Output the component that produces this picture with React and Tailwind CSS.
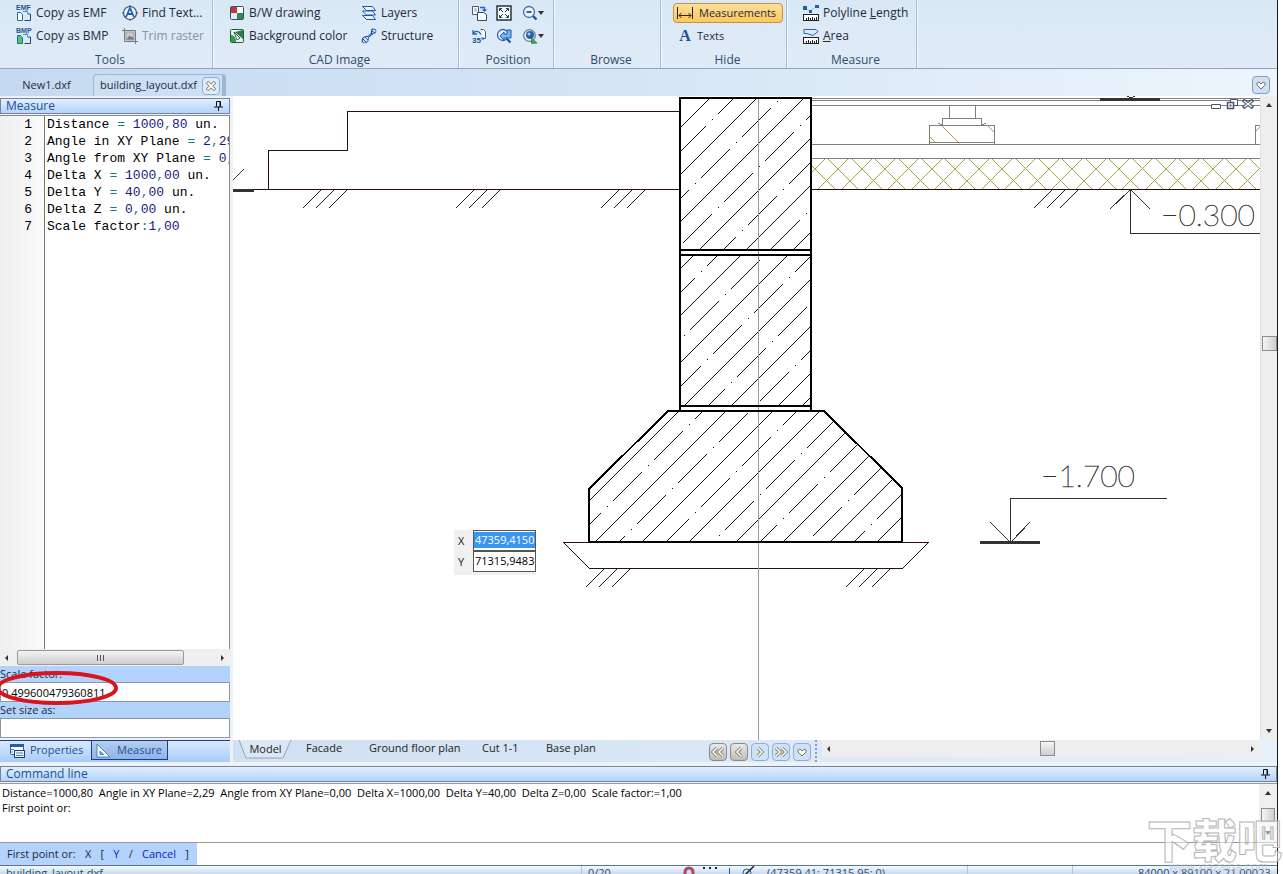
import { useState } from "react";

/* ---------- small icons ---------- */

const CopyIcon = ({ label, fill }) => (
  <svg width="16" height="18" viewBox="0 0 16 18" className="shrink-0">
    <text x="0" y="6" fontSize="7" fontWeight="700" fill="#1c5791" fontFamily="Liberation Sans, sans-serif">
      {label}
    </text>
    <path d="M1.500 8.500h3l2 2v6h-5z" fill={fill} stroke="#2b6a93" />
    <path d="M8.500 16.500h6v-6.500h-3" fill="none" stroke="#234a7a" />
    <path d="M7 7.500h4.500l-1.500-1.500M11.500 7.500v2" fill="none" stroke="#3b8fd0" />
  </svg>
);

const FindIcon = () => (
  <svg width="16" height="16" viewBox="0 0 16 16" className="shrink-0">
    <circle cx="8" cy="8" r="6.500" fill="#eef6ff" stroke="#3c4f6b" strokeWidth="1.200" />
    <path d="M4 12L8 3l4 9M5.500 9h5" fill="none" stroke="#1d62b5" strokeWidth="1.800" />
    <path d="M8 0v2M8 14v2M0 8h2M14 8h2" stroke="#3c4f6b" />
  </svg>
);

const TrimIcon = () => (
  <svg width="16" height="16" viewBox="0 0 16 16" className="shrink-0">
    <path d="M2.500 0v13.500H16M0 2.500h13.500V16" fill="none" stroke="#7a7a7a" />
    <rect x="4" y="4" width="8" height="8" fill="#c9c9c9" stroke="#9a9a9a" />
    <path d="M4.500 11.500l3-4 2 2 1-1 1.500 3z" fill="#777" />
  </svg>
);

const BwIcon = () => (
  <svg width="16" height="16" viewBox="0 0 16 16" className="shrink-0">
    <rect x="1.500" y="1.500" width="13" height="13" rx="1" fill="#fff" stroke="#31506e" />
    <path d="M2 2h6v6H2z" fill="#c8323a" />
    <path d="M8 8h6v6H8z" fill="#2f8d4c" />
    <path d="M2 8h6v6H2z" fill="#e4ebf2" />
  </svg>
);

const BackgroundIcon = () => (
  <svg width="16" height="16" viewBox="0 0 16 16" className="shrink-0">
    <rect x="1.500" y="1.500" width="13" height="13" rx="1" fill="#e8f5ea" stroke="#1f5e38" />
    <path d="M2 14V7c3 0 5 3 5 7z" fill="#2f9e4b" />
    <path d="M14 2v9L6 4z" fill="#2b7d44" />
    <path d="M5 4l6 6-3 2z" fill="#fff" stroke="#17384f" strokeWidth=".8" />
  </svg>
);

const LayersIcon = () => (
  <svg width="16" height="16" viewBox="0 0 16 16" className="shrink-0">
    <g fill="#e9f3ff" stroke="#1e57a6">
      <path d="M1.500 10.500h10l3 4h-9z" />
      <path d="M1.500 6h10l3 4h-9z" />
      <path d="M1.500 1.500h10l3 4h-9z" />
    </g>
  </svg>
);

const StructureIcon = () => (
  <svg width="16" height="16" viewBox="0 0 16 16" className="shrink-0">
    <path d="M1.500 14.500c-1-4 1-6 4-6s5 0 5-4 1-4 4-3" fill="none" stroke="#1f4f9c" strokeWidth="1.200" />
    <path d="M1.500 14.500c4 1 6-1 6-4s1-5 4-5 4-1 3-4" fill="none" stroke="#3f7fd0" strokeWidth="1.200" />
    <path d="M2 11l3 3M4 9l3 3M10 5l2 2M11 3l3 2" stroke="#1f4f9c" />
  </svg>
);

const PasteViewIcon = () => (
  <svg width="16" height="16" viewBox="0 0 16 16">
    <path d="M1.500 1.500h6v8h-6z" fill="#fff" stroke="#4b5b70" />
    <path d="M6.500 7.500h6l3 2v6h-9z" fill="#fff" stroke="#33475f" />
    <path d="M9 2.500h4.500V6M11.500 4.500l2 1.500 2-1.500" fill="none" stroke="#1d66bd" strokeWidth="1.300" />
    <path d="M3 4h3M3 6h3" stroke="#8ea2b8" />
  </svg>
);

const FitIcon = () => (
  <svg width="16" height="16" viewBox="0 0 16 16">
    <rect x="1" y="1" width="14" height="14" fill="#f6faff" stroke="#223344" strokeWidth="1.500" />
    <path d="M3.500 6V3.500H6M10 3.500h2.500V6M12.500 10v2.500H10M6 12.500H3.500V10M4 4l3 3M12 4L9 7M4 12l3-3M12 12L9 9" fill="none" stroke="#223344" />
  </svg>
);

const ZoomOutIcon = () => (
  <svg width="16" height="16" viewBox="0 0 16 16">
    <path d="M10.500 10.500l4 4" stroke="#1c4f99" strokeWidth="2.400" />
    <circle cx="7" cy="7" r="5.500" fill="#e8f3ff" stroke="#3b6fae" strokeWidth="1.300" />
    <path d="M4.500 7h5" stroke="#1b2f4d" strokeWidth="1.500" />
  </svg>
);

const RotateIcon = () => (
  <svg width="16" height="16" viewBox="0 0 16 16">
    <path d="M9.500 1.500h3l2 2v7h-3" fill="#fff" stroke="#4b5b70" />
    <path d="M2 5.500c2-3 6-3 8 1M2 2v4h4" fill="none" stroke="#1d66bd" strokeWidth="1.300" />
    <text x="1" y="15" fontSize="8" fontWeight="700" fill="#1c4f99" fontFamily="Liberation Sans, sans-serif">
      35°
    </text>
  </svg>
);

const ZoomBackIcon = () => (
  <svg width="16" height="16" viewBox="0 0 16 16">
    <circle cx="7" cy="7" r="5.500" fill="#e8f3ff" stroke="#2b63ad" strokeWidth="1.300" />
    <path d="M10.500 10.500l4 4" stroke="#1c4f99" strokeWidth="2.200" />
    <path d="M4 8l4-4v2h3V2h4v8H8v2z" fill="#7bb4ec" stroke="#1d5cae" />
  </svg>
);

const ZoomObjectIcon = () => (
  <svg width="16" height="16" viewBox="0 0 16 16">
    <circle cx="7.500" cy="7.500" r="5.800" fill="#eef4fa" stroke="#6c7c8d" strokeWidth="1.300" />
    <circle cx="8" cy="7" r="4" fill="#2b5f9f" />
    <circle cx="7" cy="6" r="1.500" fill="#9fd0ff" />
    <path d="M9.500 10l5.500 5-5.500.5z" fill="#3fae49" stroke="#1f7a2b" strokeWidth=".7" />
  </svg>
);

const MeasurementsIcon = () => (
  <svg width="16" height="14" viewBox="0 0 16 14" className="shrink-0">
    <path d="M.5 1v12M15.500 1v12" stroke="#222" />
    <path d="M2 9.500h12M4.500 7L2 9.500 4.500 12M11.500 7L14 9.500 11.500 12" fill="none" stroke="#222" />
  </svg>
);

const RulerIcon = ({ children }) => (
  <svg width="16" height="16" viewBox="0 0 16 16" className="shrink-0">
    {children}
    <rect x=".5" y="9.500" width="15" height="6" fill="#fff" stroke="#222" />
    <path d="M3.500 13v2M5.500 12v3M7.500 13v2M9.500 12v3M11.500 13v2M13.500 12v3" stroke="#222" />
  </svg>
);

const Pin = () => (
  <svg width="9" height="10" viewBox="0 0 9 10">
    <path d="M2.500 5.500v-5h4v5M0 6h9M4.500 6v4" fill="none" stroke="#111" />
    <path d="M6 1v5" stroke="#111" />
  </svg>
);

const Tri = ({ dir }) => {
  const d = {
    up: "M0 5l3-4 3 4z",
    down: "M0 1h6L3 5z",
    left: "M4 0v6L1 3z",
    right: "M1 0v6l3-3z",
  }[dir];
  return (
    <svg width="6" height="6" viewBox="0 0 6 6" className="shrink-0">
      <path d={d} fill="#333" />
    </svg>
  );
};

/* ---------- ribbon ---------- */

const Group = ({ title, width, children }) => (
  <section className={`${width} flex shrink-0 flex-col border-r border-[#a5bcd6] pt-[3px] shadow-[1px_0_0_#f4f9ff]`}>
    <div className="h-[49px]">{children}</div>
    <h2 className="text-center text-xs leading-4 text-[#2f4a6d]">{title}</h2>
  </section>
);

const Tool = ({ icon, children, disabled }) => (
  <button disabled={disabled} className="flex h-5 items-center gap-1 whitespace-nowrap text-xs disabled:text-[#8d9299]">
    {icon}
    {children}
  </button>
);

const Ribbon = () => {
  const [hideMeasures, setHideMeasures] = useState(true);
  return (
    <header className="flex h-[69px] shrink-0 border-b border-[#8fa6c2] bg-linear-to-b from-[#dae8f6] to-[#e0ebf7] text-[#1e2a3a]">
      <Group title="Tools" width="w-[213px] pl-4 pr-2">
        <div className="grid grid-cols-[106px_auto] gap-y-[3px]">
          <Tool icon={<CopyIcon label="EMF" fill="#fff" />}>Copy as EMF</Tool>
          <Tool icon={<FindIcon />}>Find Text...</Tool>
          <Tool icon={<CopyIcon label="BMP" fill="#57c46b" />}>Copy as BMP</Tool>
          <Tool icon={<TrimIcon />} disabled>Trim raster</Tool>
        </div>
      </Group>
      <Group title="CAD Image" width="w-[246px] pl-4 pr-2">
        <div className="grid grid-cols-[132px_auto] gap-y-[3px]">
          <Tool icon={<BwIcon />}>B/W drawing</Tool>
          <Tool icon={<LayersIcon />}>Layers</Tool>
          <Tool icon={<BackgroundIcon />}>Background color</Tool>
          <Tool icon={<StructureIcon />}>Structure</Tool>
        </div>
      </Group>
      <Group title="Position" width="w-[95px] pl-3 pr-2">
        <div className="grid grid-cols-[25px_26px_auto] gap-y-[3px]">
          <button aria-label="Copy view" className="h-5"><PasteViewIcon /></button>
          <button aria-label="Fit drawing" className="h-5"><FitIcon /></button>
          <button aria-label="Zoom out" className="flex h-5 items-center"><ZoomOutIcon /><Tri dir="down" /></button>
          <button aria-label="Rotate 35 degrees" className="h-5"><RotateIcon /></button>
          <button aria-label="Previous zoom" className="h-5"><ZoomBackIcon /></button>
          <button aria-label="Zoom to object" className="flex h-5 items-center"><ZoomObjectIcon /><Tri dir="down" /></button>
        </div>
      </Group>
      <Group title="Browse" width="w-[107px] pl-2" />
      <Group title="Hide" width="w-[126px] pl-3 pr-1">
        <div className="flex flex-col gap-[3px]">
          <button
            aria-pressed={hideMeasures}
            onClick={() => setHideMeasures(!hideMeasures)}
            className="flex h-5 w-[110px] items-center gap-1.5 whitespace-nowrap rounded-sm border border-[#c39447] bg-linear-to-b from-[#fddf9a] to-[#fdc85a] px-[3px] text-[11px]"
          >
            <MeasurementsIcon />
            Measurements
          </button>
          <button className="flex h-5 items-center gap-1 pl-1 text-[11px]">
            <span className="w-4 text-center font-[Liberation_Serif,serif] text-base font-bold text-[#1c4f99]">A</span>
            Texts
          </button>
        </div>
      </Group>
      <Group title="Measure" width="w-[130px] pl-4 pr-2">
        <div className="flex flex-col gap-[3px]">
          <Tool
            icon={
              <RulerIcon>
                <path d="M2 3l5 3 7-5" fill="none" stroke="#7aa7d8" strokeDasharray="1 1" />
                <path d="M0 1h4v4H0zM6 5h3v3H6zM12 0h4v3h-4z" fill="#1d5cae" />
              </RulerIcon>
            }
          >
            <span>Polyline <u>L</u>ength</span>
          </Tool>
          <Tool
            icon={
              <RulerIcon>
                <path d="M1 1.500h12l2 2-5 4-6-2H1z" fill="#dcebff" stroke="#2b63ad" />
              </RulerIcon>
            }
          >
            <span><u>A</u>rea</span>
          </Tool>
        </div>
      </Group>
    </header>
  );
};

const Heart = () => (
  <svg width="10" height="9" viewBox="0 0 10 9">
    <path d="M1 2l2-1 2 2 2-2 2 1v2L5 8 1 4z" fill="#fff" stroke="#77775c" />
  </svg>
);

const FileTabs = () => (
  <nav className="flex h-[27px] shrink-0 items-end bg-linear-to-r from-[#c5daf1] via-[#d6e5f5] to-[#edf5fc] text-[11px] text-[#1e2a3a]">
    <button className="h-[22px] w-[93px] whitespace-nowrap">New1.dxf</button>
    <div className="flex h-[22px] w-[133px] items-center justify-between rounded-t border border-b-0 border-r-4 border-[#9db6d3] bg-[#ccdff4] pl-1.5 pr-0.5">
      <button className="whitespace-nowrap">building_layout.dxf</button>
      <button aria-label="Close tab" className="flex h-[18px] w-[18px] shrink-0 items-center justify-center rounded border border-[#8eaed2] bg-[#dfebf8]">
        <svg width="10" height="10" viewBox="0 0 10 10">
          <path d="M1 1l8 8M9 1L1 9" stroke="#7d7d62" strokeWidth="3.500" />
          <path d="M1.500 1.500l7 7M8.500 1.500l-7 7" stroke="#fff" strokeWidth="1.800" />
        </svg>
      </button>
    </div>
    <button aria-label="Tab list" className="mb-0.5 ml-auto mr-[7px] flex h-[18px] w-[18px] items-center justify-center rounded border border-[#7f9dc2] bg-[#cfe0f3]">
      <Heart />
    </button>
  </nav>
);

/* ---------- measure panel ---------- */

const results = [
  "Distance = 1000,80 un.",
  "Angle in XY Plane = 2,29",
  "Angle from XY Plane = 0,00",
  "Delta X = 1000,00 un.",
  "Delta Y = 40,00 un.",
  "Delta Z = 0,00 un.",
  "Scale factor:1,00",
];

// colour numbers navy and operators teal
const highlight = (line) =>
  line.split(/(\d+|[=,:])/).map((part, i) => {
    if (/^\d+$/.test(part)) return <span key={i} className="text-[#1a1a80]">{part}</span>;
    if (/^[=,:]$/.test(part)) return <span key={i} className="text-[#148080]">{part}</span>;
    return part;
  });

const PanelTitle = ({ children }) => (
  <div className="flex h-4 shrink-0 items-center justify-between border border-[#74859b] bg-linear-to-b from-[#e2efff] to-[#b3d3ff] pl-[5px] pr-1.5 text-xs leading-3 text-[#1f4e8f]">
    <h3>{children}</h3>
    <button aria-label="Pin panel"><Pin /></button>
  </div>
);

const MeasurePanel = () => (
  <aside className="relative flex w-[230px] shrink-0 flex-col overflow-hidden bg-[#eef1f5] pt-[2px]">
    <PanelTitle>Measure</PanelTitle>
    <div className="mt-px flex min-h-0 flex-1 overflow-hidden border-r border-t border-[#8a8a8a] bg-white font-[Liberation_Mono,monospace] text-[13px] leading-[17px] text-black">
      <div className="w-[45px] shrink-0 border-r border-[#777] bg-linear-to-r from-[#efefef] to-[#fafafa] pr-3 text-right">
        {results.map((_, i) => (
          <div key={i}>{i + 1}</div>
        ))}
      </div>
      <div className="whitespace-pre pl-0.5">
        {results.map((line) => (
          <div key={line}>{highlight(line)}</div>
        ))}
      </div>
    </div>
    <div className="flex h-[17px] shrink-0 items-center bg-[#efefef] px-1">
      <Tri dir="left" />
      <div className="ml-[7px] flex h-[15px] w-[167px] items-center justify-center gap-0.5 rounded-xs border border-[#9a9a9a] bg-linear-to-b from-[#f3f3f3] to-[#cfcfcf]">
        <i className="h-1.5 w-px bg-[#555]" />
        <i className="h-1.5 w-px bg-[#555]" />
        <i className="h-1.5 w-px bg-[#555]" />
      </div>
      <span className="ml-auto"><Tri dir="right" /></span>
    </div>
    <label htmlFor="scale" className="h-4 shrink-0 bg-[#b3d3fd] text-[11px] leading-4 text-[#1c2838]">Scale factor:</label>
    <input id="scale" defaultValue="0.499600479360811" className="h-5 w-full shrink-0 border border-[#8b97a5] bg-white px-px text-[11px] text-black" />
    <label htmlFor="size" className="h-4 shrink-0 bg-[#b3d3fd] text-[11px] leading-4 text-[#1c2838]">Set size as:</label>
    <input id="size" className="h-5 w-full shrink-0 border border-[#8b97a5] bg-white px-px text-[11px]" />
    <div className="mt-0.5 flex h-[22px] shrink-0 border-t border-[#1d3f77] bg-linear-to-b from-[#d9e9fd] to-[#a9ccfb] text-[11px] text-[#1f4e8f]">
      <button className="flex h-[19px] w-[91px] items-center gap-1 pl-[9px]">
        <svg width="17" height="16" viewBox="0 0 17 16">
          <rect x="1.500" y="1.500" width="13" height="10" rx="1" fill="#fff" stroke="#2a5ca8" />
          <path d="M1 1h14v3H1z" fill="#2a5ca8" />
          <rect x="5.500" y="7.500" width="10" height="7" fill="#eef6ff" stroke="#1b3f77" />
          <path d="M7 10h7M7 12.500h7M2 6.500h3M2 9h2" stroke="#4d7fc4" />
        </svg>
        Properties
      </button>
      <button className="flex h-[19px] w-[77px] items-center gap-1.5 border border-t-0 border-[#1d3f77] bg-linear-to-b from-[#b4cdf0] to-[#8fb4ea] pl-1">
        <svg width="15" height="15" viewBox="0 0 15 15">
          <path d="M1 1v13h13z" fill="#f3f9ff" stroke="#4f7fbe" />
          <path d="M4 8v3.500h3.500z" fill="#8fb4ea" stroke="#4f7fbe" />
        </svg>
        Measure
      </button>
    </div>
    <svg className="pointer-events-none absolute bottom-14 left-0 h-9 w-[120px]" viewBox="0 0 120 36">
      <ellipse cx="57" cy="18" rx="59" ry="15" fill="none" stroke="#d8141c" strokeWidth="4" />
    </svg>
  </aside>
);

/* ---------- drawing ---------- */

const PITCH = 47;
const DASH = 41;

// reinforced concrete hatch: solid diagonals with dash-dot ones halfway between.
// solid: x + y of the first solid line, dot: x of one dot on the first dash-dot line
const Hatch = ({ clip, solid, dot, count, left, right }) => {
  let d = "";
  for (let k = 0; k < count; k++) {
    const s = solid + k * PITCH;
    d += `M${left} ${s - left}L${right} ${s - right}`;

    const m = Math.round(s + PITCH / 2);
    const start = Math.round(dot + (k * PITCH) / 2);
    for (let n = -9; n < 8; n++) {
      const x = start + n * DASH;
      if (x > right || x + DASH < left) continue;
      d += `M${x} ${m - x}l1 -1M${x + 6} ${m - x - 6}l29 -29`;
    }
  }
  return (
    <g clipPath={`url(#${clip})`}>
      <path d={d} stroke="#111" fill="none" />
    </g>
  );
};

const Ticks = ({ x, y, dx = 13 }) => (
  <path
    d={`M${x} ${y + 18}l18-18M${x + dx} ${y + 18}l18-18M${x + 2 * dx} ${y + 18}l18-18`}
    stroke="#2b1820"
    fill="none"
  />
);

// insulation layer, both diagonal families are 23.4 apart
const insulation = Array.from({ length: 23 }, (_, i) => {
  const up = Math.round(770.4 + i * 23.4);
  const down = Math.round(780.5 + i * 23.4);
  return `M${up} 190l32-32M${down} 158l32 32`;
}).join("");

const Drawing = () => (
  <svg className="block h-full w-full" shapeRendering="crispEdges">
    <defs>
      <clipPath id="upper"><path d="M681 99h129v150H681z" /></clipPath>
      <clipPath id="lower"><path d="M681 256h129v149H681z" /></clipPath>
      <clipPath id="footing"><path d="M590 541v-52l79-77h154l79 77v52z" /></clipPath>
      <clipPath id="band"><path d="M811 159h460v30H811z" /></clipPath>
    </defs>
    <g transform="translate(-233 -96)">
      <g clipPath="url(#band)">
        <path d={insulation} stroke="#a8a63c" fill="none" />
      </g>
      <g stroke="#808080" fill="none">
        <path d="M811 98.500h460M811 100.500h460M811 105.500h460M811 144.500h460M811 158.500h460" />
        <path d="M949.500 105v13M975.500 105v13M942.500 125v-6.500h39V125M929.500 144v-18.500h65V144M929.500 142.500h65M938 123l4 2M986 123l-4 2" />
        <path d="M1255.500 144v-18.500h20" />
      </g>
      <path d="M942 126l16 16M929 136l6 6M988 126l6 6M1256 131l5-5" stroke="#b5963a" fill="none" />

      <g stroke="#2b0d18" fill="none">
        <path d="M233 189.500h447M268.500 189v-38.500h79V111.500h333M811 189.500h460" />
        <path d="M563 542.500h366M564 543l25.500 25.500h313L928 543" />
      </g>
      <Ticks x={303} y={190} />
      <Ticks x={456} y={190} />
      <Ticks x={601} y={190} />
      <Ticks x={1034} y={190} />
      <Ticks x={586} y={569} />
      <Ticks x={846} y={569} />

      <g stroke="#333" fill="none">
        <path d="M233 180l11-11" />
        <path d="M233 190.500h21M980 542.500h60M1100 99.500h60" strokeWidth="3" />
        <path d="M1130.500 190v43.500h140M1130 190l-20 19M1131 190l19 19" />
        <path d="M1167 498.500h-156.500V542M1010 542l-20-20M1011 542l19-20" />
        <path d="M1127 96l8 4M1135 96l-8 4" />
      </g>
      <g fill="#333" stroke="#333" strokeWidth=".5" fontSize="30" fontWeight="100" fontFamily="Lato, Inter, sans-serif">
        <text x="1161" y="226">−0.300</text>
        <text x="1041" y="487">−1.700</text>
      </g>

      <Hatch clip="upper" solid={808} dot={712} count={6} left={681} right={811} />
      <Hatch clip="lower" solid={949} dot={701} count={6} left={681} right={811} />
      <Hatch clip="footing" solid={1090} dot={648} count={8} left={589} right={903} />
      <path d="M758.500 98v700" stroke="#999" />
      <g stroke="#000" strokeWidth="2" fill="none">
        <path d="M680 97v314M811 97v314M680 98h131M680 250h131M680 255h131M680 406h131" />
        <path d="M589 542v-53l79-78h156l78 77v54z" />
      </g>
    </g>
  </svg>
);

const sheets = [
  ["Facade", "w-[63px]"],
  ["Ground floor plan", "w-[113px]"],
  ["Cut 1-1", "w-16"],
  ["Base plan", "w-[76px]"],
];

const NavButton = ({ label, gray, d }) => (
  <button
    aria-label={label}
    className={`flex h-[18px] w-[18px] items-center justify-center rounded border ${
      gray ? "border-[#8b8b8b] bg-linear-to-b from-[#e8e8e8] to-[#bdbdbd]" : "border-[#8fb0d6] bg-[#cfe1f5]"
    }`}
  >
    <svg width="14" height="10" viewBox="0 0 14 10">
      <path d={d} fill="none" stroke="#7b7b5e" strokeWidth="3.200" />
      <path d={d} fill="none" stroke="#fff" strokeWidth="1.600" />
    </svg>
  </button>
);

const Canvas = () => (
  <main className="ml-[3px] flex min-w-0 flex-1 flex-col">
    <div className="flex min-h-0 flex-1">
      <div className="relative min-w-0 flex-1 overflow-hidden bg-white">
        <Drawing />
        <div className="absolute left-[221px] top-[434px] grid grid-cols-[19px_63px] bg-[#f0f0f0] pb-[3px] text-[11px] text-[#222]">
          <label htmlFor="cx" className="pl-1 leading-[21px]">X</label>
          <div className="h-[21px] border border-[#555] bg-white py-px">
            <input id="cx" defaultValue="47359,4150" className="block h-4 w-full bg-[#3a96f0] pl-px text-white" />
          </div>
          <label htmlFor="cy" className="pl-1 leading-[21px]">Y</label>
          <div className="h-[21px] border border-[#555] bg-white py-px">
            <input id="cy" defaultValue="71315,9483" className="block h-4 w-full pl-px text-black" />
          </div>
        </div>
        <div className="absolute right-1.5 top-[3px] flex items-center gap-1">
          <button aria-label="Minimize drawing">
            <svg width="12" height="12" viewBox="0 0 12 12"><path d="M1.500 5.500h9v4h-9z" fill="#fff" stroke="#44546a" /></svg>
          </button>
          <button aria-label="Restore drawing">
            <svg width="12" height="12" viewBox="0 0 12 12">
              <path d="M4.500 .5h7v6h-7z" fill="#fff" stroke="#44546a" />
              <path d="M1.500 3.500h6v6h-6z" fill="#fff" stroke="#44546a" strokeWidth="1.500" />
              <path d="M3.500 5.500h2v2h-2z" fill="#44546a" />
            </svg>
          </button>
          <button aria-label="Close drawing">
            <svg width="12" height="12" viewBox="0 0 12 12">
              <path d="M1 1l10 8M11 1L1 9" stroke="#44546a" strokeWidth="3.500" />
              <path d="M2 2l8 6M10 2L2 8" stroke="#fff" strokeWidth="1.400" />
            </svg>
          </button>
        </div>
      </div>
      <div className="flex w-[17px] shrink-0 flex-col items-center border-l border-[#e0e0e0] bg-[#eeeeee] py-1.5">
        <Tri dir="up" />
        <div className="flex-[226]" />
        <div className="h-[15px] w-[15px] border border-[#8d8d8d] bg-linear-to-r from-[#f5f5f5] to-[#cfcfcf]" />
        <div className="flex-[374]" />
        <Tri dir="down" />
      </div>
    </div>
    <div className="flex h-[22px] shrink-0 bg-linear-to-r from-[#cfe0f2] to-[#e6f0fa] text-[11px] text-[#222]">
      <div className="flex shrink-0 items-start">
        <button className="relative ml-1.5 h-[18px] w-[53px]">
          <svg className="absolute inset-0" width="53" height="19" viewBox="0 0 53 19">
            <path d="M0 0l7 18h37l8-18" fill="#dbe7f4" stroke="#8ea4bd" />
          </svg>
          <span className="relative block leading-4">Model</span>
        </button>
        <div className="w-3.5" />
        {sheets.map(([name, width]) => (
          <button key={name} className={`${width} whitespace-nowrap text-left leading-4`}>{name}</button>
        ))}
      </div>
      <div className="ml-auto flex items-center gap-[3px] pr-1 pt-0.5">
        <NavButton label="First sheet" gray d="M6 1L2 5l4 4M12 1L8 5l4 4" />
        <NavButton label="Previous sheet" gray d="M9 1L5 5l4 4" />
        <NavButton label="Next sheet" d="M5 1l4 4-4 4" />
        <NavButton label="Last sheet" d="M2 1l4 4-4 4M8 1l4 4-4 4" />
        <button aria-label="Sheet list" className="flex h-[18px] w-[18px] items-center justify-center rounded border border-[#8fb0d6] bg-[#cfe1f5]">
          <Heart />
        </button>
      </div>
      <div className="w-[3px] border-l-2 border-dotted border-[#8a9db3]" />
      <div className="ml-1 mr-[17px] flex h-[17px] w-[438px] items-center bg-[#eeeeee] px-1">
        <Tri dir="left" />
        <div className="flex-[208]" />
        <div className="h-[15px] w-[15px] border border-[#8d8d8d] bg-linear-to-b from-[#f5f5f5] to-[#cfcfcf]" />
        <div className="flex-[195]" />
        <Tri dir="right" />
      </div>
    </div>
  </main>
);

/* ---------- command line ---------- */

const CommandLine = () => (
  <section className="shrink-0 bg-[#eef1f5] pt-1">
    <PanelTitle>Command line</PanelTitle>
    <div className="mt-px flex h-[60px] border-b border-t border-[#9a9a9a] bg-white text-[11px] leading-[15px] text-black">
      <div className="flex-1 whitespace-pre pl-0.5 pt-px">
        <p>Distance=1000,80  Angle in XY Plane=2,29  Angle from XY Plane=0,00  Delta X=1000,00  Delta Y=40,00  Delta Z=0,00  Scale factor:=1,00</p>
        <p>First point or:</p>
      </div>
      <div className="flex w-[18px] flex-col items-center bg-[#f0f0f0] py-1.5">
        <Tri dir="up" />
        <div className="mt-auto h-[14px] w-[14px] border border-[#8d8d8d] bg-linear-to-r from-[#f5f5f5] to-[#cfcfcf]" />
        <div className="h-2" />
        <Tri dir="down" />
      </div>
    </div>
    <div className="flex h-[22px] bg-white">
      <div className="flex w-[197px] items-center justify-between bg-[#b3d3fd] pl-[7px] pr-2 text-[11px] text-[#1c2838]">
        <label htmlFor="cmd">First point or:</label>
        <span>X</span>
        <span>[</span>
        <button className="text-[#1414c8]">Y</button>
        <span>/</span>
        <button className="text-[#1414c8]">Cancel</button>
        <span>]</span>
      </div>
      <input id="cmd" className="min-w-0 flex-1 px-1 outline-none" />
    </div>
  </section>
);

const StatusBar = () => (
  <footer className="flex h-[9px] shrink-0 overflow-hidden border-t border-[#5d7594] bg-linear-to-b from-[#f4f9ff] to-[#c8dcf2] text-[11px] leading-[14px] text-[#2f4a6d]">
    <span className="w-[581px] pl-1.5">building_layout.dxf</span>
    <span className="w-[98px] border-l border-[#b3c6dc] pl-1.5">0/20</span>
    <div className="flex w-[88px] items-start gap-2 pl-1">
      <svg width="12" height="12" viewBox="0 0 12 12" className="shrink-0">
        <path d="M2 11V6a4 4 0 018 0v5" fill="none" stroke="#b8454b" strokeWidth="3" />
        <path d="M3.500 11V6a2.500 2.500 0 015 0" fill="none" stroke="#7aa3d4" />
      </svg>
      <svg width="14" height="12" viewBox="0 0 14 12" className="shrink-0">
        <path d="M0 1h2v2H0zM6 1h2v2H6zM12 1h2v2h-2z" fill="#222" />
      </svg>
      <svg width="8" height="12" viewBox="0 0 8 12" className="shrink-0"><path d="M4.500 2v10" stroke="#2b5ca0" /></svg>
      <svg width="14" height="12" viewBox="0 0 14 12" className="shrink-0">
        <circle cx="6" cy="7" r="4" fill="none" stroke="#2b5ca0" />
        <path d="M1 12L13 0" stroke="#222" strokeWidth="1.500" />
      </svg>
    </div>
    <span className="w-[200px]">(47359,41; 71315,95; 0)</span>
    <span className="w-[105px] border-l border-[#b3c6dc]" />
    <span className="flex-1 overflow-hidden whitespace-nowrap border-l border-[#b3c6dc] pl-[65px]">84000 x 89100 x 21,00023</span>
  </footer>
);

const App = () => (
  <div className="relative h-screen overflow-hidden bg-white pr-[5px] font-[Open_Sans,Noto_Sans,sans-serif]">
    <div className="flex h-full flex-col border-r border-[#1a1a1a] bg-[#eef1f5]">
      <Ribbon />
      <FileTabs />
      <div className="flex min-h-0 flex-1">
        <MeasurePanel />
        <Canvas />
      </div>
      <CommandLine />
      <StatusBar />
    </div>
    <svg className="pointer-events-none absolute bottom-0 right-0 h-[60px] w-[136px]" viewBox="0 0 136 60">
      <text x="0" y="44" fontSize="45" fontWeight="900" fill="#fff" fillOpacity=".5" stroke="#b5b5b5" strokeWidth="1" fontFamily="Noto Sans CJK SC, sans-serif">
        下载吧
      </text>
      <text x="22" y="57" fontSize="12" fill="#b9c2cc" fillOpacity=".7" fontFamily="Liberation Sans, sans-serif">
        www.xiazaiba.com
      </text>
    </svg>
  </div>
);

export default App;
